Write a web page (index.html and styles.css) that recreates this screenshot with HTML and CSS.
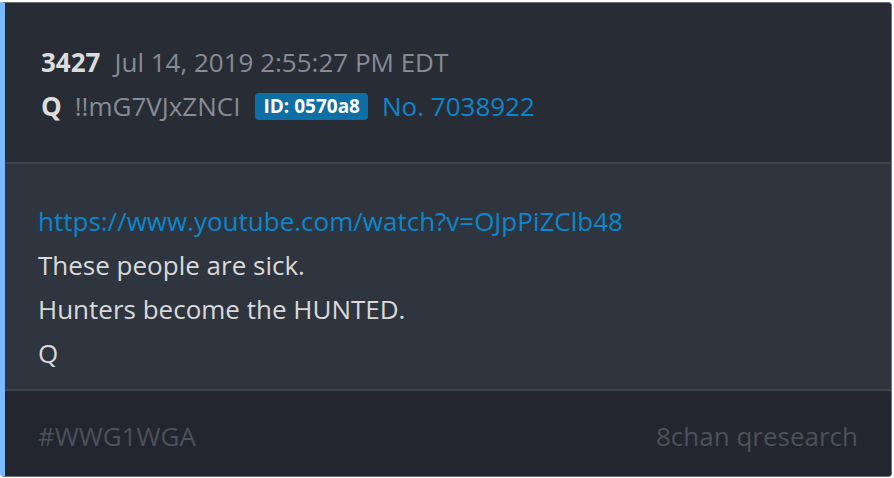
FILE: index.html
```html
<!DOCTYPE html>
<html>
<head>
<meta charset="utf-8">
<link rel="stylesheet" href="styles.css">
</head>
<body>
<div class="card">
  <div class="head">
    <div class="line"><span class="num">3427</span><span class="date">Jul 14, 2019 2:55:27 PM EDT</span></div>
    <div class="line"><span class="name">Q</span><span class="trip">!!mG7VJxZNCI</span><span class="badge">ID: 0570a8</span><span class="no">No. 7038922</span></div>
  </div>
  <div class="body">
    <div class="line"><a class="link">https://www.youtube.com/watch?v=OJpPiZClb48</a></div>
    <div class="line">These people are sick.</div>
    <div class="line">Hunters become the HUNTED.</div>
    <div class="line">Q</div>
  </div>
  <div class="foot">
    <span>#WWG1WGA</span>
    <span>8chan qresearch</span>
  </div>
</div>
</body>
</html>
```
FILE: styles.css
```css
html, body { margin: 0; padding: 0; background: #ffffff; }
body { font-family: "Open Sans", "Noto Sans", sans-serif; }
.card {
  margin-top: 2px;
  width: 886px;
  height: 473px;
  border: 1px solid #6b7079;
  border-left: 5px solid #7ab8ff;
  border-radius: 0 4px 4px 4px;
  background: #282c35;
  display: flex;
  flex-direction: column;
  overflow: hidden;
}
.head {
  background: #282c35;
  height: 161px;
  padding: 37px 0 0 36px;
  box-sizing: border-box;
  border-bottom: 2px solid #3d424b;
  font-size: 26px;
}
.head .line { height: 44px; line-height: 44px; display: flex; align-items: center; }
.num { font-weight: 700; color: #dcdcdc; margin-right: 14px; }
.date { color: #868b94; }
.name { font-weight: 700; color: #dcdcdc; margin-right: 13px; }
.trip { color: #868b94; margin-right: 15px; }
.badge {
  background: #0e6ea6;
  color: #ffffff;
  font-weight: 700;
  font-size: 19px;
  line-height: 27px;
  height: 27px;
  padding: 0 8px;
  border-radius: 4px;
  margin-right: 14px;
}
.no { color: #0a87cc; }
.body {
  background: #2f353f;
  height: 227px;
  box-sizing: border-box;
  padding: 35px 0 0 33px;
  border-bottom: 2px solid #3d424b;
  font-size: 26px;
  color: #d9d9d9;
}
.body .line { height: 44px; line-height: 44px; }
.link { color: #0a87cc; text-decoration: none; }
.foot {
  flex: 1;
  background: #23262e;
  display: flex;
  justify-content: space-between;
  align-items: center;
  padding: 4px 33px 0;
  font-size: 26px;
  color: #4c515a;
}
```
